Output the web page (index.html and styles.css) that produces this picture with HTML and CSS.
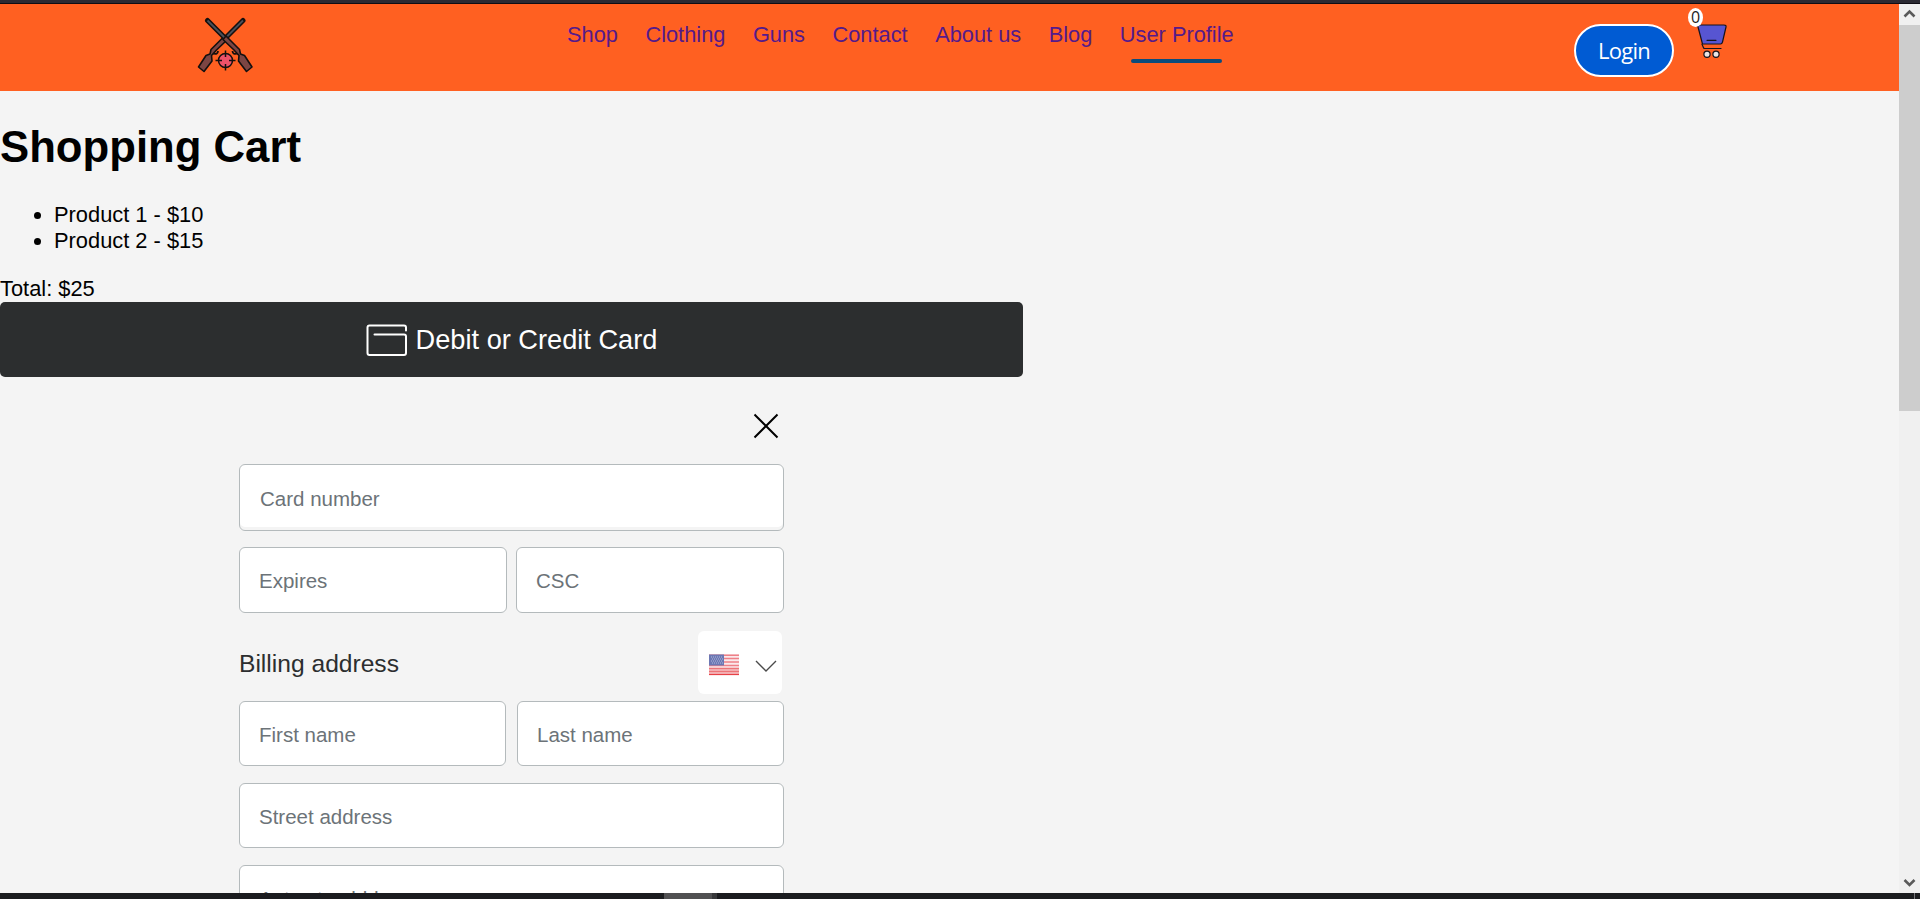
FILE: index.html
```
<!DOCTYPE html>
<html lang="en">
<head>
<meta charset="utf-8">
<title>Shopping Cart</title>
<link rel="stylesheet" href="styles.css">
</head>
<body>
<div class="window">
  <div class="top-edge"></div>
  <div class="viewport">
    <div class="page">
      <header class="header">
        <svg class="logo" width="58" height="56" viewBox="0 0 58 56">
          <defs>
            <g id="gun">
              <path d="M10.500 3.500 29 22" stroke="#15100f" stroke-width="5" stroke-linecap="round"/>
              <path d="M10.500 3.500 29 22" stroke="#4b515b" stroke-width="1.800"/>
              <path d="M35.500 34Q35.500 38 41 36.500" fill="none" stroke="#15100f" stroke-width="1.800"/>
              <path d="M29 19 42.500 32.500 43.500 37 47.500 38.500 55 50 49.500 54.500 41.500 44 42 38.500 37 33 26 22.500Z" fill="#7c4543" stroke="#15100f" stroke-width="1.600" stroke-linejoin="round"/>
            </g>
          </defs>
          <use href="#gun" transform="translate(56.500 0) scale(-1 1)"/>
          <use href="#gun"/>
          <circle cx="28.500" cy="43.500" r="7" fill="#ef5269" stroke="#15100f" stroke-width="1.500"/>
          <path d="M28.500 33.500v6.500M28.500 47v6.500M18.500 43.500h6.500M32 43.500h6.500" stroke="#15100f" stroke-width="1.500"/>
        </svg>
        <nav class="nav">
          <a>Shop</a><a>Clothing</a><a>Guns</a><a>Contact</a><a>About us</a><a>Blog</a><a class="active">User Profile</a>
        </nav>
        <button class="login">Login</button>
        <div class="cart">
          <svg width="32" height="34" viewBox="0 0 32 34" fill="none" stroke="#15131c" stroke-width="1.2" stroke-linecap="round" stroke-linejoin="round">
            <path d="M1.500 1H28q2.500 0 2 2L26.500 18q-.5 2-2 2H6.500Z" fill="#5755d2"/>
            <path d="M11 16.300h9M6 20.200l1.500 3.500q.3.800 1.300.800H25"/>
            <circle cx="11" cy="30.300" r="3.100" fill="#e9e5e5"/>
            <circle cx="20" cy="30.300" r="3.100" fill="#e9e5e5"/>
          </svg>
          <span class="badge">0</span>
        </div>
      </header>
      <main>
        <h1>Shopping Cart</h1>
        <ul><li>Product 1 - $10</li><li>Product 2 - $15</li></ul>
        <div class="total">Total: $25</div>
        <button class="card-button">
          <svg width="42" height="33" viewBox="0 0 42 33" fill="none" stroke="#fff" stroke-width="2" stroke-linecap="round">
            <path d="M40 6.500V3.500Q40 1.500 38 1.500H3.500Q1.500 1.500 1.500 3.500V29Q1.500 31 3.500 31H38Q40 31 40 29V12.500Q40 10.500 38 10.500H8.500"/>
          </svg>
          <span>Debit or Credit Card</span>
        </button>
        <form class="form">
          <svg class="close" width="26" height="26" viewBox="0 0 26 26" stroke="#000" stroke-width="2"><path d="M1.500 1.500 24.500 24.500M24.500 1.500 1.500 24.500"/></svg>
          <div class="field card-number">Card number</div>
          <div class="row payment"><div class="field">Expires</div><div class="field">CSC</div></div>
          <div class="billing">
            <span>Billing address</span>
            <div class="country">
              <svg width="30" height="22" viewBox="0 0 30 22">
                <rect width="30" height="22" fill="#fbe9eb"/>
                <path d="M0 1.300h30M0 4.600h30M0 7.900h30M0 11.500h30" stroke="#ee8088" stroke-width="1.500"/>
                <path d="M0 14.700h30M0 17.500h30" stroke="#ec7478" stroke-width="1.800"/>
                <path d="M0 20.300h30" stroke="#e6383e" stroke-width="1.300"/>
                <rect y=".5" width="15" height="11" fill="#6c78b4"/>
                <path d="M2 3h12M3 5h11M2 7h12M3 9h11" stroke="#b3b9dc" stroke-width="1" stroke-dasharray="1 1"/>
              </svg>
              <svg class="chevron" width="22" height="13" viewBox="0 0 22 13" fill="none" stroke="#4a4a4a" stroke-width="1.400"><path d="M1 1 11 11 21 1"/></svg>
            </div>
          </div>
          <div class="row names"><div class="field">First name</div><div class="field">Last name</div></div>
          <div class="field address">Street address</div>
          <div class="field address">Apt., ste., bldg.</div>
        </form>
      </main>
    </div>
    <div class="scrollbar">
      <svg width="21" height="21" viewBox="0 0 21 21" fill="none" stroke="#5a5a5a" stroke-width="2.600"><path d="M5.500 12.500 10.500 7.500 15.500 12.500"/></svg>
      <div class="thumb"></div>
      <svg class="down" width="21" height="21" viewBox="0 0 21 21" fill="none" stroke="#5a5a5a" stroke-width="2.600"><path d="M5.500 8 10.500 13 15.500 8"/></svg>
    </div>
  </div>
  <div class="taskbar"><span class="task"></span><span class="task-edge"></span><span class="divider"></span></div>
</div>
</body>
</html>
```
FILE: styles.css
```
* { box-sizing: border-box; }
body { margin: 0; font: 21.850px/26px "Liberation Sans", Arial, sans-serif; color: #000; }
button { font: inherit; margin: 0; padding: 0; }
svg { display: block; flex: none; }
.window { display: flex; flex-direction: column; width: 1920px; height: 899px; overflow: hidden; }
.top-edge { flex: none; height: 4px; background: #2b2a33; border-bottom: 1px solid #0f0d14; }
.viewport { flex: 1; min-height: 0; display: flex; }
.page { flex: 1; overflow: hidden; background: #f4f4f4; }

.header { display: flex; align-items: flex-start; height: 87px; padding-left: 197px; background: #ff6021; }
.logo { margin-top: 13px; }
.nav { display: flex; gap: 27.500px; width: 667px; margin: 18px 0 0 312px; color: #551a8b; font-size: 21.800px; white-space: nowrap; }
.active::after { content: ""; display: block; width: 80%; height: 4px; margin: 11px auto 0; border-radius: 2px; background: #0b4c7c; }
.login { width: 100px; height: 53px; margin: 20px 0 0 340px; padding-bottom: 2px; border: 2px solid #fff; border-radius: 27px; background: #005bd3; color: #fff; font: 22px/30px "Open Sans", "Noto Sans", sans-serif; letter-spacing: -.7px; }
.cart { position: relative; margin: 20px 0 0 22px; }
.badge { position: absolute; left: -8px; top: -16px; width: 15px; height: 19px; border-radius: 50%; background: #fff; color: #222; font: 16px/19px "Open Sans", "Noto Sans", sans-serif; text-align: center; }

h1 { margin: 31px 0 30px; font-size: 43.700px; line-height: 50px; }
ul { margin: 0 0 22px; padding-left: 54px; }
.total { height: 26px; }
.card-button { display: flex; align-items: center; justify-content: center; gap: 8px; width: 1023px; height: 75px; border: 0; border-radius: 5px; background: #2c2e2f; color: #fff; font-size: 27.200px; }
.card-button svg { margin-top: 1px; }

.form { display: flex; flex-direction: column; width: 545px; margin: 36px 0 0 239px; }
.close { align-self: flex-end; margin-right: 5px; }
.field { flex: none; height: 65px; padding: 20px 19px 0; border: 1px solid #b4babc; border-radius: 6px; background: #fff; color: #6c7378; font-size: 20.500px; }
.row { display: grid; grid-template-columns: 1fr 1fr; }
.card-number { height: 67px; margin: 25px 0 16px; padding-left: 20px; padding-top: 21px; box-shadow: inset 0 -3px #f4f4f4; }
.payment { gap: 9px; }
.payment .field { height: 66px; }
.names { gap: 11px; }
.billing { display: flex; align-items: center; justify-content: space-between; height: 63px; margin: 18px 0 7px; padding-right: 2px; color: #2c2e2f; font-size: 24.600px; }
.billing span { padding-top: 2px; }
.country { display: flex; align-items: center; gap: 16px; width: 84px; height: 63px; padding: 4px 0 0 11px; border-radius: 6px; background: #fff; }
.chevron { margin-top: 3px; }
.address { margin-top: 17px; }

.scrollbar { flex: none; display: flex; flex-direction: column; width: 21px; background: #f0f0f0; }
.thumb { height: 386px; background: #cdcdcd; }
.down { margin-top: auto; }
.taskbar { flex: none; display: flex; height: 6px; padding-left: 664px; background: #1b1c1f; }
.task { width: 48px; background: #505052; }
.task-edge { width: 5px; background: #37383a; }
.divider { width: 1px; margin: 0 5px 0 auto; background: #77777b; }
```
